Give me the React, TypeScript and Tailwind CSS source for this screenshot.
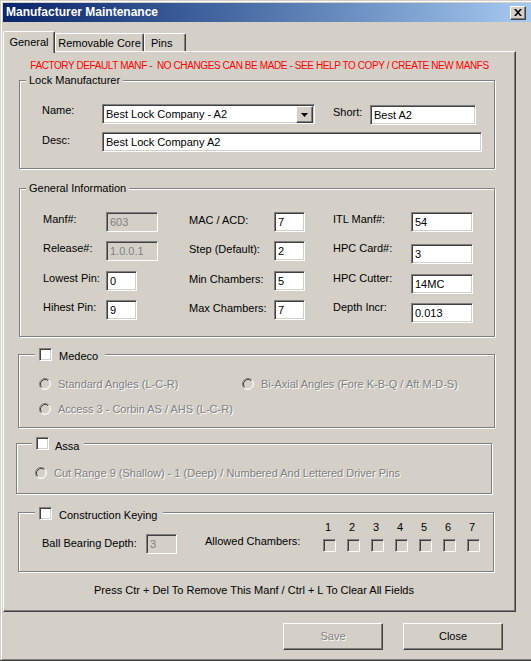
import React from 'react';

const sunken =
  'border border-t-[#808080] border-l-[#808080] border-b-white border-r-white shadow-[inset_1px_1px_0_#404040,inset_-1px_-1px_0_#d4d0c8]';
const raised =
  'border border-t-white border-l-white border-b-[#404040] border-r-[#404040] shadow-[inset_-1px_-1px_0_#808080]';
const etched = 'border border-[#808080] shadow-[inset_1px_1px_0_#fff,1px_1px_0_#fff]';
const grayText = 'text-[#808080] [text-shadow:1px_1px_0_#fff]';

const Field = ({ value, w, disabled, className = '' }: { value: string; w: string; disabled?: boolean; className?: string }) => (
    <div
        className={`h-[20px] ${w} ${sunken} ${disabled ? 'bg-[#d4d0c8] text-[#808080]' : 'bg-white text-black'} pl-[3px] leading-[18px] whitespace-nowrap overflow-hidden ${className}`}
    >
        {value}
    </div>
);

const Check = ({ disabled }: { disabled?: boolean }) => (
    <div className={`w-[13px] h-[13px] shrink-0 ${sunken} ${disabled ? 'bg-[#d4d0c8]' : 'bg-white'}`} />
);

const Radio = () => (
    <svg width="12" height="12" viewBox="0 0 12 12" className="shrink-0">
        <circle cx="6" cy="6" r="4" fill="#d4d0c8" />
        <path d="M2.11 9.89A5.5 5.5 0 0 1 9.89 2.11" fill="none" stroke="#808080" />
        <path d="M9.89 2.11A5.5 5.5 0 0 1 2.11 9.89" fill="none" stroke="#fff" />
        <path d="M2.82 9.18A4.5 4.5 0 0 1 9.18 2.82" fill="none" stroke="#404040" />
        <path d="M9.18 2.82A4.5 4.5 0 0 1 2.82 9.18" fill="none" stroke="#e8e6e2" />
    </svg>
);

const RadioOption = ({ label, className = '' }: { label: string; className?: string }) => (
    <div className={`flex items-center gap-[7px] ${className}`}>
        <Radio />
        <span className={`leading-[14px] whitespace-nowrap ${grayText}`}>{label}</span>
    </div>
);

// General Information rows
const infoRows = [
    { l1: 'Manf#:', v1: '603', d1: true, w1: 'w-[52px]', l2: 'MAC / ACD:', v2: '7', l3: 'ITL Manf#:', v3: '54', off: false, h: 'h-[29px]' },
    { l1: 'Release#:', v1: '1.0.0.1', d1: true, w1: 'w-[52px]', l2: 'Step (Default):', v2: '2', l3: 'HPC Card#:', v3: '3', off: true, h: 'h-[30px]' },
    { l1: 'Lowest Pin:', v1: '0', d1: false, w1: 'w-[31px]', l2: 'Min Chambers:', v2: '5', l3: 'HPC Cutter:', v3: '14MC', off: true, h: 'h-[29px]' },
    { l1: 'Hihest Pin:', v1: '9', d1: false, w1: 'w-[31px]', l2: 'Max Chambers:', v2: '7', l3: 'Depth Incr:', v3: '0.013', off: true, h: 'h-[29px]' },
];

export default function App() {
    return (
        <div className="w-[531px] h-[661px] bg-[#d4d0c8] border-b border-b-[#404040] pt-[1px] pl-[1px] overflow-hidden font-['Liberation_Sans',Arial,sans-serif] text-[11px] text-black">
            <div className="h-full border-l border-t border-b border-l-white border-t-white border-b-[#808080] pt-[1px] pl-[1px] flex flex-col">
                {/* Title bar */}
                <div className="h-[19px] shrink-0 flex items-center justify-between pr-[5px] bg-gradient-to-r from-[#0a246a] to-[#a6caf0]">
                    <span className="pl-[3px] text-white font-bold text-[12px] leading-[19px]">Manufacturer Maintenance</span>
                    <div className={`w-[16px] h-[14px] bg-[#d4d0c8] ${raised} flex items-center justify-center`}>
                        <svg width="8" height="7" viewBox="0 0 8 7">
                            <path d="M0 0h2l2 2.2L6 0h2L5 3.5 8 7H6L4 4.8 2 7H0l3-3.5z" fill="#000" />
                        </svg>
                    </div>
                </div>

                {/* Tabs */}
                <div className="h-[29px] shrink-0 flex items-end">
                    <div className="relative z-10 -mb-[2px] h-[22px] w-[52px] bg-[#d4d0c8] border-l border-t border-r border-l-white border-t-white border-r-[#404040] rounded-t-[2px] shadow-[inset_-1px_0_0_#808080] text-center pt-[3px] leading-[14px]">
                        General
                    </div>
                    <div className="h-[18px] w-[89px] border-l border-t border-r border-l-white border-t-white border-r-[#404040] rounded-t-[2px] shadow-[inset_-1px_0_0_#808080] text-center pt-[2px] leading-[14px]">
                        Removable Core
                    </div>
                    <div className="h-[18px] w-[42px] border-l border-t border-r border-l-white border-t-white border-r-[#404040] rounded-t-[2px] shadow-[inset_-1px_0_0_#808080] pl-[6px] pt-[2px] leading-[14px]">
                        Pins
                    </div>
                </div>

                {/* Tab panel */}
                <div className={`w-[513px] h-[561px] shrink-0 ${raised} flex flex-col`}>
                    <div className="mt-[7px] leading-[14px] text-center text-[10px] tracking-[-0.4px] text-[#ff0000] whitespace-pre">
                        FACTORY DEFAULT MANF -  NO CHANGES CAN BE MADE - SEE HELP TO COPY / CREATE NEW MANFS
                    </div>

                    {/* Lock Manufacturer */}
                    <div className={`relative ml-[15px] mt-[7px] w-[476px] h-[89px] shrink-0 ${etched} pt-[23px] pl-[22px]`}>
                        <span className="absolute left-[6px] top-[-8px] px-[3px] bg-[#d4d0c8] leading-[14px]">Lock Manufacturer</span>
                        <div className="flex items-start">
                            <span className="w-[60px] -mt-[1px] leading-[14px]">Name:</span>
                            <div className={`w-[213px] h-[20px] ${sunken} bg-white flex items-start`}>
                                <span className="pl-[3px] leading-[18px] flex-1">Best Lock Company - A2</span>
                                <div className={`w-[17px] h-[17px] mt-[1px] mr-[1px] bg-[#d4d0c8] ${raised} flex items-center justify-center`}>
                                    <svg width="7" height="4" viewBox="0 0 7 4">
                                        <path d="M0 0h7L3.5 4z" fill="#000" />
                                    </svg>
                                </div>
                            </div>
                            <span className="ml-[18px] w-[37px] mt-[1px] leading-[14px]">Short:</span>
                            <Field value="Best A2" w="w-[106px]" className="mt-[1px]" />
                        </div>
                        <div className="flex items-start mt-[7px]">
                            <span className="w-[60px] leading-[14px] pt-[1px]">Desc:</span>
                            <Field value="Best Lock Company A2" w="w-[380px]" />
                        </div>
                    </div>

                    {/* General Information */}
                    <div className={`relative ml-[15px] mt-[19px] w-[476px] h-[149px] shrink-0 ${etched} pt-[23px] pl-[23px]`}>
                        <span className="absolute left-[6px] top-[-8px] px-[3px] bg-[#d4d0c8] leading-[14px]">General Information</span>
                        {infoRows.map((r) => (
                            <div key={r.l1} className={`flex items-start ${r.h}`}>
                                <span className="w-[63px] leading-[14px]">{r.l1}</span>
                                <div className="w-[83px]">
                                    <Field value={r.v1} w={r.w1} disabled={r.d1} />
                                </div>
                                <span className="w-[85px] leading-[14px] mt-[1px]">{r.l2}</span>
                                <div className="w-[59px]">
                                    <Field value={r.v2} w="w-[31px]" />
                                </div>
                                <span className="w-[78px] leading-[14px]">{r.l3}</span>
                                <Field value={r.v3} w="w-[62px]" className={r.off ? 'mt-[3px]' : ''} />
                            </div>
                        ))}
                    </div>

                    {/* Medeco */}
                    <div className={`relative ml-[14px] mt-[17px] w-[477px] h-[74px] shrink-0 ${etched} pt-[22px] pl-[20px]`}>
                        <div className="absolute left-[16px] top-[-7px] pl-[4px] pr-[7px] bg-[#d4d0c8] flex items-start gap-[7px]">
                            <Check />
                            <span className="mt-[1px] leading-[14px]">Medeco</span>
                        </div>
                        <div className="flex items-center h-[14px]">
                            <RadioOption label="Standard Angles (L-C-R)" className="w-[203px]" />
                            <RadioOption label="Bi-Axial Angles (Fore K-B-Q / Aft M-D-S)" />
                        </div>
                        <div className="flex items-center h-[14px] mt-[11px]">
                            <RadioOption label="Access 3 - Corbin AS / AHS (L-C-R)" />
                        </div>
                    </div>

                    {/* Assa */}
                    <div className={`relative ml-[12px] mt-[15px] w-[476px] h-[51px] shrink-0 ${etched} pt-[22px] pl-[18px]`}>
                        <div className="absolute left-[15px] top-[-7px] pl-[4px] pr-[5px] bg-[#d4d0c8] flex items-start gap-[6px]">
                            <Check />
                            <span className="mt-[2px] leading-[14px]">Assa</span>
                        </div>
                        <div className="flex items-center h-[14px]">
                            <RadioOption label="Cut Range 9 (Shallow) - 1 (Deep) / Numbered And Lettered Driver Pins" />
                        </div>
                    </div>

                    {/* Construction Keying */}
                    <div className={`relative ml-[14px] mt-[18px] w-[476px] h-[60px] shrink-0 ${etched} pt-[7px] pl-[23px]`}>
                        <div className="absolute left-[16px] top-[-6px] pl-[4px] pr-[6px] bg-[#d4d0c8] flex items-start gap-[7px]">
                            <Check />
                            <span className="mt-[1px] leading-[14px]">Construction Keying</span>
                        </div>
                        <div className="flex items-start">
                            <span className="w-[104px] mt-[16px] leading-[14px]">Ball Bearing Depth:</span>
                            <Field value="3" w="w-[31px]" disabled className="mt-[14px]" />
                            <span className="ml-[28px] w-[118px] mt-[14px] leading-[14px]">Allowed Chambers:</span>
                            <div className="flex gap-[11px]">
                                {['1', '2', '3', '4', '5', '6', '7'].map((n) => (
                                    <div key={n} className="w-[13px] flex flex-col items-center">
                                        <span className="leading-[14px] -ml-[3px]">{n}</span>
                                        <div className="mt-[5px]">
                                            <Check disabled />
                                        </div>
                                    </div>
                                ))}
                            </div>
                        </div>
                    </div>

                    <div className="mt-[11px] leading-[14px] text-center pr-[11px]">
                        Press Ctr + Del To Remove This Manf / Ctrl + L To Clear All Fields
                    </div>
                </div>

                {/* Buttons */}
                <div className="mt-[11px] flex gap-[20px] pl-[280px]">
                    <div className={`w-[100px] h-[27px] ${raised} text-center leading-[25px] ${grayText}`}>Save</div>
                    <div className={`w-[100px] h-[27px] ${raised} text-center leading-[25px]`}>Close</div>
                </div>
            </div>
        </div>
    );
}
